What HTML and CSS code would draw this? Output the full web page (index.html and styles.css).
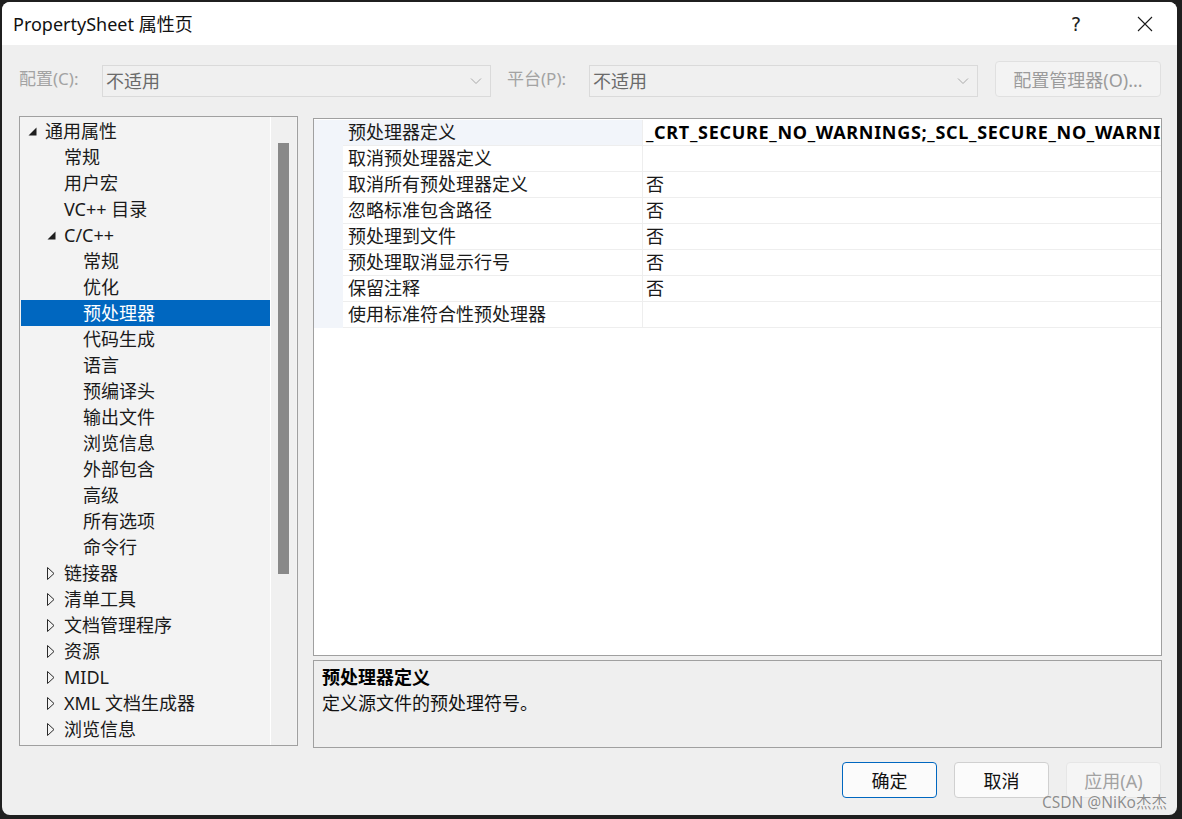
FILE: index.html
```html
<!DOCTYPE html>
<html lang="zh-CN">
<head>
<meta charset="utf-8">
<title>PropertySheet 属性页</title>
<link rel="stylesheet" href="styles.css">
</head>
<body>
<div class="window">
  <div class="titlebar">
    <div class="title">PropertySheet 属性页</div>
    <div class="cap help">?</div>
    <div class="cap close">
      <svg width="16" height="16" viewBox="0 0 16 16"><path d="M1 1 L15 15 M15 1 L1 15" stroke="#1a1a1a" stroke-width="1.1" fill="none"/></svg>
    </div>
  </div>

  <div class="toolbar">
    <div class="label lbl-config">配置(C):</div>
    <div class="combo">
      <span class="combo-text">不适用</span>
      <svg class="chev" width="12" height="8" viewBox="0 0 12 8"><path d="M1 1.5 L6 6.5 L11 1.5" stroke="#a8a8a8" stroke-width="1" fill="none"/></svg>
    </div>
    <div class="label lbl-platform">平台(P):</div>
    <div class="combo">
      <span class="combo-text">不适用</span>
      <svg class="chev" width="12" height="8" viewBox="0 0 12 8"><path d="M1 1.5 L6 6.5 L11 1.5" stroke="#a8a8a8" stroke-width="1" fill="none"/></svg>
    </div>
    <div class="cfg-btn">配置管理器(O)...</div>
  </div>

  <div class="main">
    <div class="tree">
      <div class="tree-list">
        <div class="node l0"><span class="arrow"><svg width="9" height="9" viewBox="0 0 9 9"><path d="M8.5 0.5 L8.5 8.5 L0.5 8.5 Z" fill="#1e1e1e"/></svg></span><span>通用属性</span></div>
        <div class="node l1"><span class="arrow"></span><span>常规</span></div>
        <div class="node l1"><span class="arrow"></span><span>用户宏</span></div>
        <div class="node l1"><span class="arrow"></span><span>VC++ 目录</span></div>
        <div class="node l1"><span class="arrow"><svg width="9" height="9" viewBox="0 0 9 9"><path d="M8.5 0.5 L8.5 8.5 L0.5 8.5 Z" fill="#1e1e1e"/></svg></span><span>C/C++</span></div>
        <div class="node l2"><span class="arrow"></span><span>常规</span></div>
        <div class="node l2"><span class="arrow"></span><span>优化</span></div>
        <div class="node l2 selected"><span class="arrow"></span><span>预处理器</span></div>
        <div class="node l2"><span class="arrow"></span><span>代码生成</span></div>
        <div class="node l2"><span class="arrow"></span><span>语言</span></div>
        <div class="node l2"><span class="arrow"></span><span>预编译头</span></div>
        <div class="node l2"><span class="arrow"></span><span>输出文件</span></div>
        <div class="node l2"><span class="arrow"></span><span>浏览信息</span></div>
        <div class="node l2"><span class="arrow"></span><span>外部包含</span></div>
        <div class="node l2"><span class="arrow"></span><span>高级</span></div>
        <div class="node l2"><span class="arrow"></span><span>所有选项</span></div>
        <div class="node l2"><span class="arrow"></span><span>命令行</span></div>
        <div class="node l1"><span class="arrow"><svg width="8" height="13" viewBox="0 0 8 13"><path d="M0.5 0.5 L7 6.5 L0.5 12.5 Z" stroke="#2a2a2a" stroke-width="1" fill="none"/></svg></span><span>链接器</span></div>
        <div class="node l1"><span class="arrow"><svg width="8" height="13" viewBox="0 0 8 13"><path d="M0.5 0.5 L7 6.5 L0.5 12.5 Z" stroke="#2a2a2a" stroke-width="1" fill="none"/></svg></span><span>清单工具</span></div>
        <div class="node l1"><span class="arrow"><svg width="8" height="13" viewBox="0 0 8 13"><path d="M0.5 0.5 L7 6.5 L0.5 12.5 Z" stroke="#2a2a2a" stroke-width="1" fill="none"/></svg></span><span>文档管理程序</span></div>
        <div class="node l1"><span class="arrow"><svg width="8" height="13" viewBox="0 0 8 13"><path d="M0.5 0.5 L7 6.5 L0.5 12.5 Z" stroke="#2a2a2a" stroke-width="1" fill="none"/></svg></span><span>资源</span></div>
        <div class="node l1"><span class="arrow"><svg width="8" height="13" viewBox="0 0 8 13"><path d="M0.5 0.5 L7 6.5 L0.5 12.5 Z" stroke="#2a2a2a" stroke-width="1" fill="none"/></svg></span><span>MIDL</span></div>
        <div class="node l1"><span class="arrow"><svg width="8" height="13" viewBox="0 0 8 13"><path d="M0.5 0.5 L7 6.5 L0.5 12.5 Z" stroke="#2a2a2a" stroke-width="1" fill="none"/></svg></span><span>XML 文档生成器</span></div>
        <div class="node l1"><span class="arrow"><svg width="8" height="13" viewBox="0 0 8 13"><path d="M0.5 0.5 L7 6.5 L0.5 12.5 Z" stroke="#2a2a2a" stroke-width="1" fill="none"/></svg></span><span>浏览信息</span></div>
      </div>
      <div class="scrollbar"><div class="thumb"></div></div>
    </div>

    <div class="right">
      <div class="grid">
        <div class="prop-row current"><div class="gutter"></div><div class="name">预处理器定义</div><div class="value bold">_CRT_SECURE_NO_WARNINGS;_SCL_SECURE_NO_WARNINGS;%(PreprocessorDefinitions)</div></div>
        <div class="prop-row"><div class="gutter"></div><div class="name">取消预处理器定义</div><div class="value"></div></div>
        <div class="prop-row"><div class="gutter"></div><div class="name">取消所有预处理器定义</div><div class="value">否</div></div>
        <div class="prop-row"><div class="gutter"></div><div class="name">忽略标准包含路径</div><div class="value">否</div></div>
        <div class="prop-row"><div class="gutter"></div><div class="name">预处理到文件</div><div class="value">否</div></div>
        <div class="prop-row"><div class="gutter"></div><div class="name">预处理取消显示行号</div><div class="value">否</div></div>
        <div class="prop-row"><div class="gutter"></div><div class="name">保留注释</div><div class="value">否</div></div>
        <div class="prop-row"><div class="gutter"></div><div class="name">使用标准符合性预处理器</div><div class="value"></div></div>
      </div>
      <div class="desc">
        <div class="desc-title">预处理器定义</div>
        <div class="desc-text">定义源文件的预处理符号。</div>
      </div>
    </div>
  </div>

  <div class="footer">
    <div class="btn primary">确定</div>
    <div class="btn">取消</div>
    <div class="btn disabled">应用(A)</div>
  </div>

  <div class="watermark">CSDN @NiKo杰杰</div>
</div>
</body>
</html>
```

FILE: styles.css
```css
html, body {
  margin: 0;
  padding: 0;
}

body {
  background: #1f1f1f;
  width: 1182px;
  height: 819px;
  overflow: hidden;
  font-family: "Noto Sans", "Noto Sans CJK SC", sans-serif;
  font-size: 18px;
  color: #1a1a1a;
}

.window {
  position: relative;
  margin: 2px 0 0 2px;
  width: 1175px;
  height: 813px;
  background: #efefef;
  border-radius: 8px;
  overflow: hidden;
  display: flex;
  flex-direction: column;
}

/* title bar */
.titlebar {
  flex: none;
  height: 43px;
  background: #ffffff;
  display: flex;
  align-items: center;
  padding-left: 11px;
}

.title {
  flex: 1;
  font-size: 18px;
  line-height: 24px;
  color: #111;
}

.cap {
  display: flex;
  align-items: center;
  justify-content: center;
  height: 43px;
}

.help {
  width: 46px;
  margin-right: 14px;
  font-family: "DejaVu Sans", sans-serif;
  font-size: 19px;
  color: #222;
}

.close {
  width: 64px;
}

/* toolbar */
.toolbar {
  flex: none;
  display: flex;
  align-items: center;
  height: 36px;
  padding: 16px 0 0 17px;
}

.label {
  color: #a3a3a3;
  font-size: 17px;
  line-height: 32px;
}

.lbl-config {
  width: 83px;
}

.lbl-platform {
  width: 82px;
  margin-left: 16px;
}

.combo {
  box-sizing: border-box;
  width: 389px;
  height: 32px;
  margin-top: 4px;
  border: 1px solid #dadada;
  background: #f0f0f0;
  display: flex;
  align-items: center;
  padding: 0 8px 0 3px;
}

.combo-text {
  flex: 1;
  color: #6a6a6a;
  line-height: 30px;
}

.chev {
  display: block;
}

.cfg-btn {
  box-sizing: border-box;
  margin-left: 17px;
  width: 166px;
  height: 36px;
  border: 1px solid #e0e0e0;
  border-radius: 4px;
  background: #f3f3f3;
  color: #9b9b9b;
  display: flex;
  align-items: center;
  justify-content: center;
}

/* main area */
.main {
  flex: none;
  display: flex;
  align-items: flex-start;
  height: 632px;
  padding: 19px 0 0 17px;
}

.tree {
  box-sizing: border-box;
  width: 279px;
  height: 630px;
  border: 1px solid #a0a0a0;
  background: #f3f3f3;
  display: flex;
}

.tree-list {
  width: 250px;
  padding: 1px 0 0 1px;
  box-sizing: border-box;
  overflow: hidden;
}

.node {
  display: flex;
  align-items: center;
  height: 26px;
  line-height: 26px;
  white-space: nowrap;
  color: #1a1a1a;
}

.node.l0 { padding-left: 7px; }
.node.l1 { padding-left: 26px; }
.node.l2 { padding-left: 45px; }

.arrow {
  flex: none;
  width: 17px;
  height: 26px;
  display: flex;
  align-items: center;
}

.node.l0 .arrow svg,
.node.l1 .arrow svg {
  display: block;
}

.node.selected {
  background: #0067c0;
  color: #ffffff;
}

.scrollbar {
  flex: none;
  width: 26px;
  border-left: 1px solid #ffffff;
  box-sizing: border-box;
  background: #f0f0f0;
}

.thumb {
  margin: 26px 0 0 7px;
  width: 11px;
  height: 431px;
  background: #898989;
}

.right {
  margin: 2px 0 0 15px;
  width: 849px;
  display: flex;
  flex-direction: column;
  gap: 4px;
}

.grid {
  box-sizing: border-box;
  height: 538px;
  border: 1px solid #a0a0a0;
  background: #ffffff;
  padding-top: 1px;
  overflow: hidden;
}

.prop-row {
  display: grid;
  grid-template-columns: 29px 300px 1fr;
  height: 26px;
}

.gutter {
  background: #f2f5fa;
}

.name,
.value {
  box-sizing: border-box;
  height: 26px;
  line-height: 25px;
  border-bottom: 1px solid #eeeeee;
  white-space: nowrap;
  overflow: hidden;
  color: #1a1a1a;
}

.name {
  padding-left: 5px;
  border-right: 1px solid #eeeeee;
}

.value {
  padding-left: 3px;
}

.value.bold {
  font-weight: 700;
  letter-spacing: 0.7px;
  color: #000;
}

.prop-row.current .name {
  background: #f2f5fa;
}

.desc {
  box-sizing: border-box;
  height: 88px;
  border: 1px solid #a0a0a0;
  background: #efefef;
  padding: 3px 8px 0 8px;
}

.desc-title {
  font-weight: 700;
  line-height: 26px;
  color: #000;
}

.desc-text {
  line-height: 26px;
  color: #111;
}

/* footer */
.footer {
  flex: none;
  display: flex;
  justify-content: flex-end;
  gap: 17px;
  padding: 14px 16px 0 0;
}

.btn {
  box-sizing: border-box;
  width: 95px;
  height: 36px;
  border: 1px solid #d0d0d0;
  border-radius: 4px;
  background: #fbfbfb;
  display: flex;
  align-items: center;
  justify-content: center;
  color: #111;
}

.btn.primary {
  border-color: #0067c0;
}

.btn.disabled {
  border-color: #e6e6e6;
  background: #f5f5f5;
  color: #a2a2a2;
}

.watermark {
  position: absolute;
  right: 10px;
  bottom: 3px;
  font-size: 15.5px;
  line-height: 20px;
  color: rgba(120, 120, 120, 0.85);
  text-shadow: 0 0 1px rgba(255, 255, 255, 0.8);
  white-space: nowrap;
}
```
